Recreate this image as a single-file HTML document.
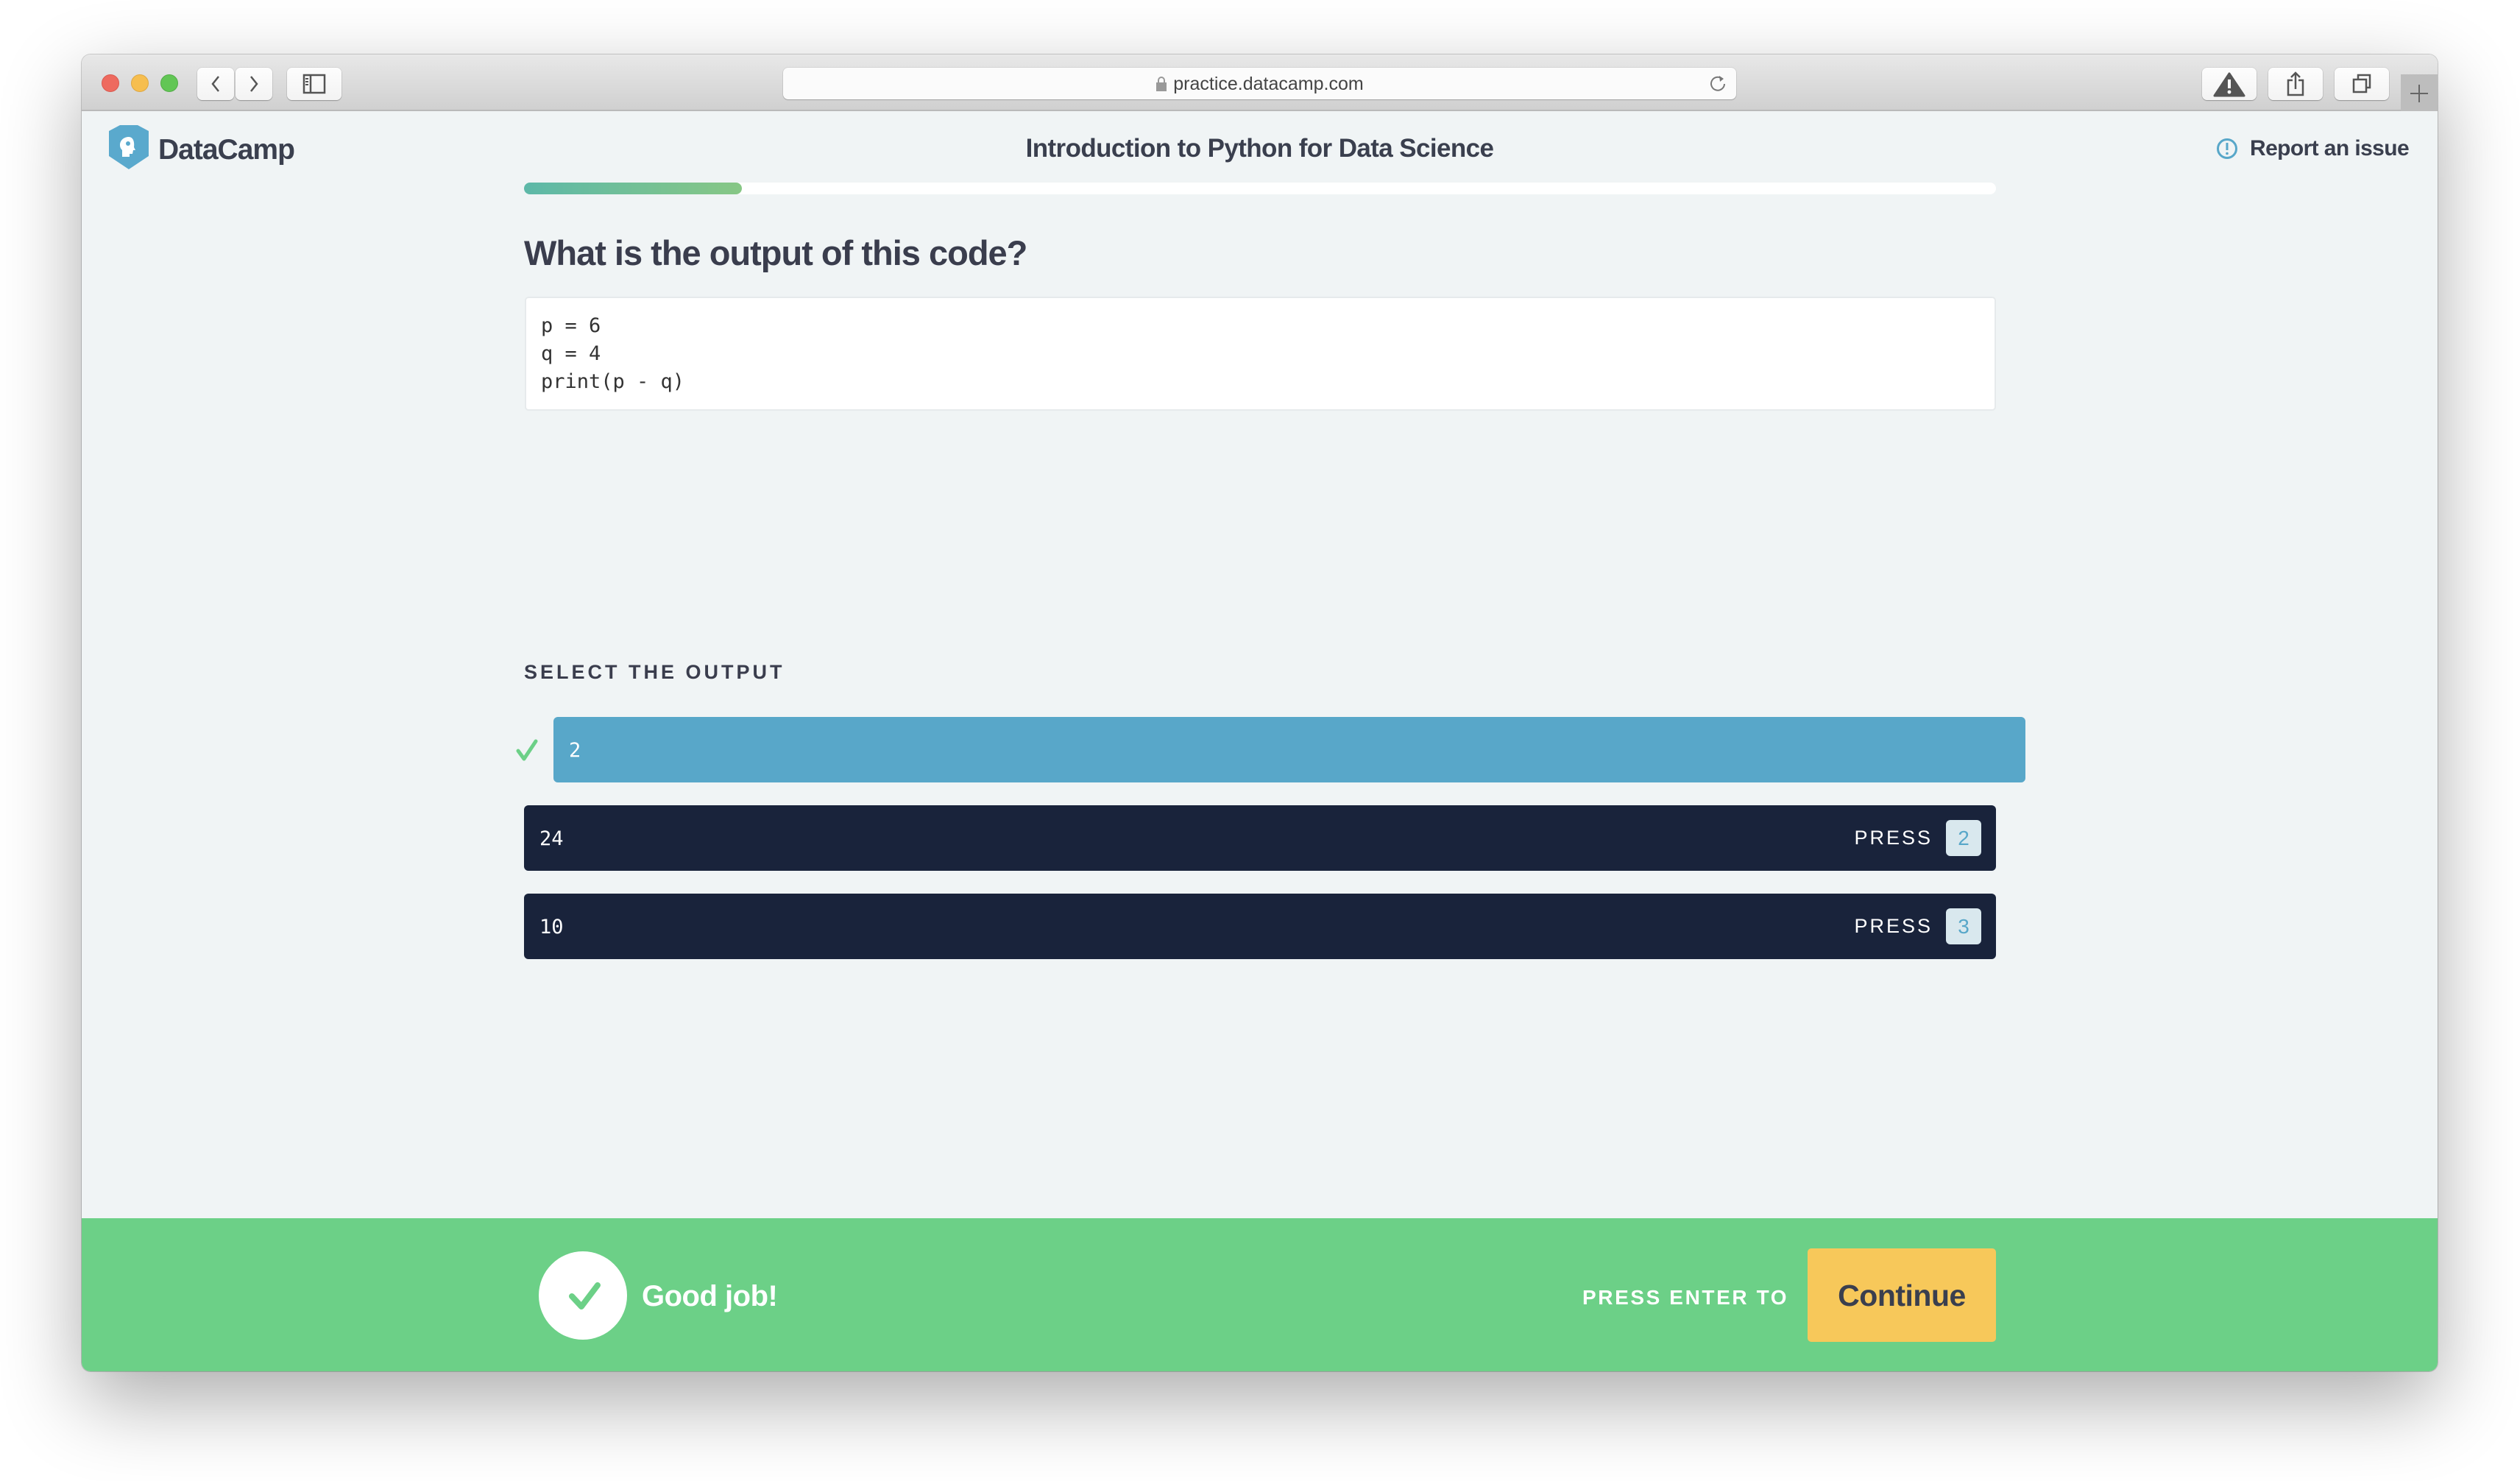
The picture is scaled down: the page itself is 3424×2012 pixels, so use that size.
<!DOCTYPE html>
<html><head><meta charset="utf-8"><style>
*{margin:0;padding:0;box-sizing:border-box}
html,body{width:3424px;height:2012px;background:#fff;overflow:hidden;font-family:"Liberation Sans",sans-serif}
.win{position:absolute;left:111px;top:74px;width:3201px;height:1789px;border-radius:12px;overflow:hidden;background:#f0f4f5;box-shadow:0 40px 110px rgba(0,0,0,.33),0 0 0 1px rgba(0,0,0,.18)}
.tb{position:absolute;left:0;top:0;width:100%;height:77px;background:linear-gradient(#e8e8e8,#d0d0d0);border-bottom:2px solid #b9b9b9}
.dot{position:absolute;top:27px;width:24px;height:24px;border-radius:50%}
.btn{position:absolute;top:18px;height:44px;background:linear-gradient(#fdfdfd,#f3f3f3);border-radius:7px;box-shadow:0 1px 1px rgba(0,0,0,.25),0 0 0 1px rgba(0,0,0,.06)}
.addr{position:absolute;left:953px;top:18px;width:1295px;height:43px;background:#fbfbfb;border-radius:7px;box-shadow:0 1px 1px rgba(0,0,0,.2),0 0 0 1px rgba(0,0,0,.06);font-size:25px;color:#444;text-align:center;line-height:45px}
.a{position:absolute;white-space:nowrap}
.opt{position:absolute;height:89px;border-radius:6px;color:#fff;font-family:"DejaVu Sans Mono","Liberation Mono",monospace;font-size:27px;line-height:91px;padding-left:21px}
.press{position:absolute;right:20px;top:20px;height:49px;display:flex;align-items:center;font-family:"Liberation Sans",sans-serif;font-size:27px;letter-spacing:3px;line-height:49px}
.key{width:48px;height:49px;margin-left:18px;background:#d9e8ee;border-radius:6px;color:#58a7c9;text-align:center;line-height:49px;letter-spacing:0;font-size:28px}
</style></head><body>
<div class="win">
 <div class="tb">
  <div class="dot" style="left:27px;background:#ee6a5f;border:1px solid #d95a50"></div>
  <div class="dot" style="left:67px;background:#f6be4f;border:1px solid #dea843"></div>
  <div class="dot" style="left:107px;background:#62c655;border:1px solid #53ad48"></div>
  <div class="btn" style="left:157px;width:50px"><svg width="50" height="44"><path d="M29 12 L21 22 L29 32" fill="none" stroke="#555" stroke-width="2.5"/></svg></div>
  <div class="btn" style="left:209px;width:50px"><svg width="50" height="44"><path d="M21 12 L29 22 L21 32" fill="none" stroke="#555" stroke-width="2.5"/></svg></div>
  <div class="btn" style="left:279px;width:74px"><svg width="74" height="44"><rect x="23" y="10" width="28" height="24" fill="none" stroke="#555" stroke-width="2.5"/><line x1="32" y1="10" x2="32" y2="34" stroke="#555" stroke-width="2.5"/><path d="M25 15h4M25 19h4M25 23h4" stroke="#555" stroke-width="2"/></svg></div>
  <div class="addr"><svg width="16" height="22" style="vertical-align:-3px;margin-right:8px"><rect x="1" y="9" width="14" height="12" fill="#999"/><path d="M4 9V6a4 4 0 0 1 8 0v3" fill="none" stroke="#999" stroke-width="2"/></svg>practice.datacamp.com<svg width="30" height="30" style="position:absolute;right:10px;top:7px"><path d="M21 8 A9 9 0 1 0 24 15" fill="none" stroke="#777" stroke-width="2"/><path d="M17 4 L23 8 L18 12" fill="#777"/></svg></div>
  <div class="btn" style="left:2881px;width:74px"><svg width="74" height="44"><path d="M37 8 L57 38 H17 Z" fill="#555" stroke="#555" stroke-width="3" stroke-linejoin="round"/><rect x="35" y="16" width="4" height="12" fill="#fff"/><circle cx="37" cy="33" r="2.4" fill="#fff"/></svg></div>
  <div class="btn" style="left:2971px;width:74px"><svg width="74" height="44"><path d="M33 17h-6v20h20V17h-6" fill="none" stroke="#555" stroke-width="2.5"/><path d="M37 29V7M31 13l6-6 6 6" fill="none" stroke="#555" stroke-width="2.5"/></svg></div>
  <div class="btn" style="left:3061px;width:74px"><svg width="74" height="44"><rect x="26" y="16" width="17" height="17" fill="none" stroke="#555" stroke-width="2.5"/><path d="M32 16v-6h16v17h-5" fill="none" stroke="#555" stroke-width="2.5"/></svg></div>
  <div style="position:absolute;left:3151px;top:27px;width:50px;height:50px;background:#bdbdbd"><svg width="50" height="50"><path d="M25 14v24M13 26h24" stroke="#666" stroke-width="2"/></svg></div>
 </div>
 <svg class="a" style="left:36px;top:96px" width="56" height="60" viewBox="0 0 56 60"><path d="M16 0 H40 L55 8 V42 L28 60 L1 42 V8 Z" fill="#5aa9cd"/><path d="M28 16c-7 0-12 5-12 11 0 3 1 5 3 7v9h10v-4h4l1-5h3l-2-4c1-7-1-14-7-14z" fill="#fff"/><circle cx="27" cy="25" r="3" fill="#5aa9cd"/></svg>
 <div class="a" style="left:104px;top:108px;font-size:39px;font-weight:bold;color:#3a3f4e;letter-spacing:-1px">DataCamp</div>
 <div class="a" style="left:0;width:3201px;text-align:center;top:108px;font-size:35px;font-weight:bold;color:#3a3f4e;letter-spacing:-0.6px">Introduction to Python for Data Science</div>
 <svg class="a" style="left:2900px;top:113px" width="30" height="30"><circle cx="15" cy="15" r="12.5" fill="none" stroke="#58a7c9" stroke-width="3"/><rect x="13.5" y="7" width="3" height="10" fill="#58a7c9"/><circle cx="15" cy="21.5" r="1.8" fill="#58a7c9"/></svg>
 <div class="a" style="left:2946px;top:111px;font-size:30px;font-weight:bold;color:#3a3f4e;letter-spacing:-0.6px">Report an issue</div>
 <div class="a" style="left:601px;top:174px;width:2000px;height:16px;border-radius:8px;background:#fff"></div>
 <div class="a" style="left:601px;top:174px;width:296px;height:16px;border-radius:8px;background:linear-gradient(90deg,#5db8a8,#87c785)"></div>
 <div class="a" style="left:601px;top:242px;font-size:47px;font-weight:bold;color:#3a3d4d;letter-spacing:-1px">What is the output of this code?</div>
 <div class="a" style="left:602px;top:329px;width:1999px;height:155px;background:#fff;border:2px solid #e6eaec;border-radius:5px;padding:19px 0 0 20px;font-family:'DejaVu Sans Mono','Liberation Mono',monospace;font-size:27px;line-height:38px;color:#333">p = 6<br>q = 4<br>print(p - q)</div>
 <div class="a" style="left:601px;top:824px;font-size:27px;font-weight:bold;letter-spacing:4px;color:#3a3d4d">SELECT THE OUTPUT</div>
 <svg class="a" style="left:589px;top:929px" width="34" height="32"><path d="M4 17 L12 28 L28 4" fill="none" stroke="#6cd087" stroke-width="5" stroke-linecap="round" stroke-linejoin="round"/></svg>
 <div class="opt" style="left:641px;top:900px;width:2000px;background:#58a7c9">2</div>
 <div class="opt" style="left:601px;top:1020px;width:2000px;background:#19233b">24<div class="press">PRESS<div class="key">2</div></div></div>
 <div class="opt" style="left:601px;top:1140px;width:2000px;background:#19233b">10<div class="press">PRESS<div class="key">3</div></div></div>
 <div class="a" style="left:0;top:1581px;width:3201px;height:208px;background:#6cd087"></div>
 <div class="a" style="left:621px;top:1626px;width:120px;height:120px;border-radius:50%;background:#fff"><svg width="120" height="120"><path d="M45 61 L58 75 L80 46" fill="none" stroke="#6cd087" stroke-width="8" stroke-linecap="round" stroke-linejoin="round"/></svg></div>
 <div class="a" style="left:761px;top:1665px;font-size:40px;font-weight:bold;color:#fff;letter-spacing:-0.5px">Good job!</div>
 <div class="a" style="left:2039px;top:1673px;font-size:28px;font-weight:bold;color:#fff;letter-spacing:2.6px">PRESS ENTER TO</div>
 <div class="a" style="left:2345px;top:1622px;width:256px;height:127px;background:#f7c85a;border-radius:5px;text-align:center;line-height:129px;font-size:41px;font-weight:bold;color:#3a3f4e;letter-spacing:-0.5px">Continue</div>
</div>
</body></html>
